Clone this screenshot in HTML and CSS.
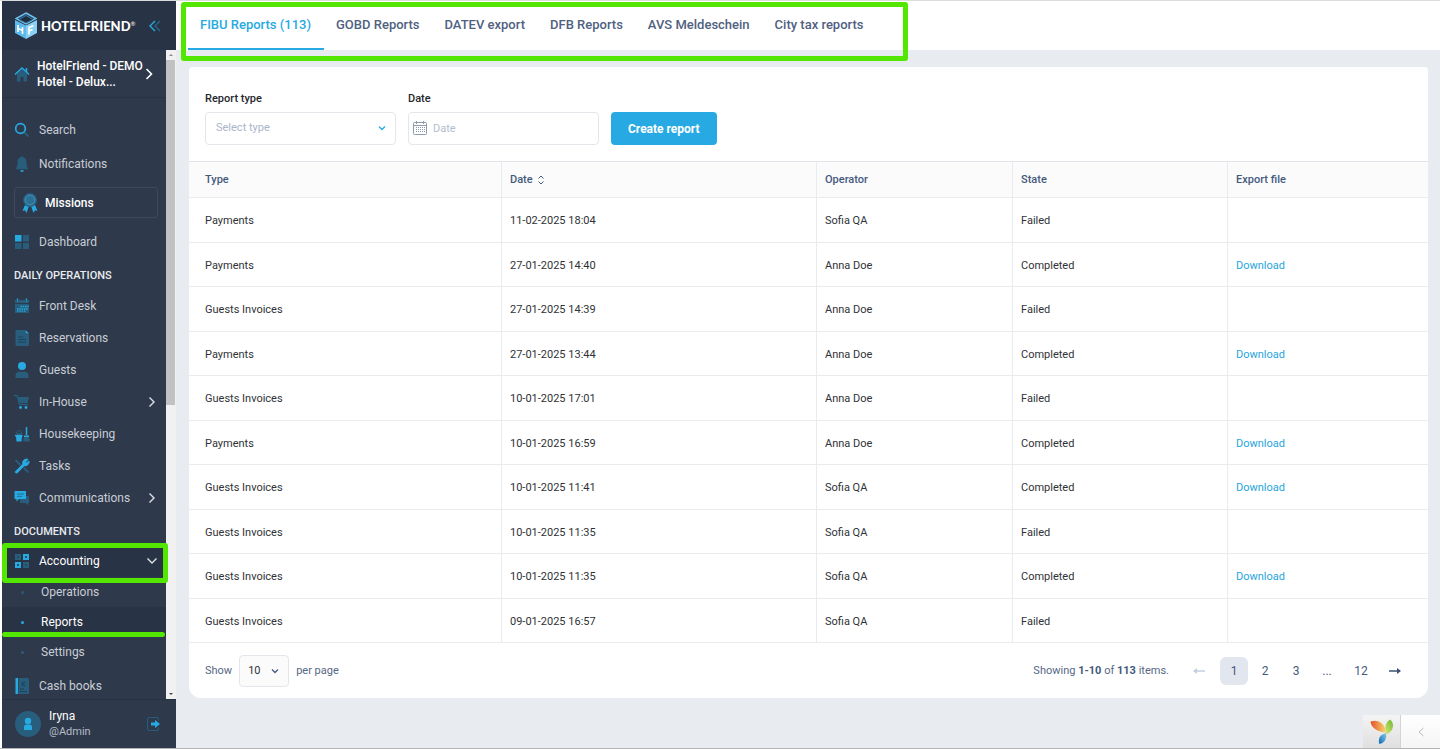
FILE: index.html
```html
<!DOCTYPE html>
<html lang="en">
<head>
<meta charset="utf-8">
<title>HotelFriend - FIBU Reports</title>
<link rel="stylesheet" href="styles.css">
</head>
<body>
<div class="shell">
  <aside class="sidebar">
    <div class="brand">
      <svg class="brand-mark" viewBox="0 0 22 28" aria-hidden="true">
        <path d="M11 1 21 6.500 11 12 1 6.500Z" fill="#22405c" stroke="#6fc3f0" stroke-width="1.500"/>
        <path d="M4 7.500 11 3.500 18 7.500 11 11Z" fill="#1d2c3e" stroke="#3c7aa3"/>
        <path d="M0 8 11 13.500V27L0 21Z" fill="#5db9ec"/>
        <path d="M22 8 11 13.500V27L22 21Z" fill="#8ad0f6"/>
        <path d="M3 13v7M7.500 15v7M3 16.500l4.500 2M14 22.500v-7l4.500-2M14 19l3.500-1.500" fill="none" stroke="#fff" stroke-width="1.600"/>
      </svg>
      <span class="brand-name">HOTELFRIEND<sup>®</sup></span>
      <button class="collapse" aria-label="Collapse menu">
        <svg viewBox="0 0 12 12"><path d="M6 1 1 6l5 5" stroke="#27aae1"/><path d="M11 1 6 6l5 5" stroke="#27658a"/></svg>
      </button>
    </div>
    <div class="scroll-area">
      <nav class="menu">
        <a class="hotel" href="#">
          <svg class="icon" viewBox="0 0 16 16"><path d="M3 8v7.500h3.500V11h3v4.500H13V8L8 3.500Z" fill="#285d7c"/><path d="M1 8.500 8 2l7 6.500M12.500 2v4" fill="none" stroke="#27aae1" stroke-width="1.600"/></svg>
          <span class="hotel-name">HotelFriend - DEMO<br>Hotel - Delux...</span>
          <svg class="chev big" viewBox="0 0 8 12"><path d="m1.500 1 5 5-5 5"/></svg>
        </a>
        <ul class="group top">
          <li><a class="item" href="#"><svg class="icon" viewBox="0 0 16 16"><path d="m10.500 10.500 4 4" stroke="#285d7c" stroke-width="2"/><circle cx="6.500" cy="6.500" r="4.800" fill="none" stroke="#27aae1" stroke-width="1.700"/></svg>Search</a></li>
          <li><a class="item" href="#"><svg class="icon" viewBox="0 0 16 18"><path d="M8 0a1 1 0 0 1 1 1.200C12 2 13 4 13 7c0 4 1 6 2.500 8H.5C2 13 3 11 3 7c0-3 1-5 4-5.800A1 1 0 0 1 8 0Z" fill="#285d7c"/><path d="M6 16h4a2 2 0 0 1-4 0Z" fill="#27aae1"/></svg>Notifications</a></li>
          <li><a class="item missions" href="#"><svg class="icon" viewBox="0 0 16 20"><path d="m3 12-2.500 6 2.500-.7L4.500 20 7 13Zm10 0 2.500 6-2.500-.7L11.500 20 9 13Z" fill="#27aae1"/><circle cx="8" cy="7" r="7" fill="#285d7c"/><circle cx="8" cy="7" r="5" fill="#2c7094" stroke="#3f96c0"/></svg>Missions</a></li>
          <li><a class="item" href="#"><svg class="icon" viewBox="0 0 16 16"><path d="M1 1h6.500v6.500H1Z" fill="#27aae1"/><path d="M9 1h6v6.500H9ZM1 9h6.500v6H1Zm8 0h6v6H9Z" fill="#285d7c"/></svg>Dashboard</a></li>
        </ul>
        <h2 class="heading">DAILY OPERATIONS</h2>
        <ul class="group">
          <li><a class="item" href="#"><svg class="icon" viewBox="0 0 16 16"><path d="M1 2h14v3H1Zm0 4h14v9H1Z" fill="#285d7c"/><path d="M3.500.5v3M12.500.5v3M6.500 8.500h8M3 11h11M3 13.200h9" stroke="#27aae1" stroke-width="1.300" stroke-dasharray="1.500 .8"/></svg>Front Desk</a></li>
          <li><a class="item" href="#"><svg class="icon" viewBox="0 0 16 16"><path d="M2.500 0H11v4h4v10.500a1.500 1.500 0 0 1-1.500 1.500h-11A1.500 1.500 0 0 1 1.500 14.500v-13A1 1 0 0 1 2.500 0Z" fill="#285d7c"/><path d="M11.500 0 15 3.500h-3.500Z" fill="#27aae1"/><path d="M4 7h5M4 9.500h8M4 12h8" stroke="#1c435d"/></svg>Reservations</a></li>
          <li><a class="item" href="#"><svg class="icon" viewBox="0 0 16 16"><circle cx="8" cy="4" r="4" fill="#27aae1"/><path d="M1.500 16v-2a4.500 4.500 0 0 1 4-4.500q2.500 1 5 0a4.500 4.500 0 0 1 4 4.500v2Z" fill="#285d7c"/></svg>Guests</a></li>
          <li><a class="item" href="#"><svg class="icon" viewBox="0 0 16 16"><path d="M0 1.500h3l2.500 9H14" fill="none" stroke="#285d7c" stroke-width="1.300"/><path d="M3.500 3H15l-1.500 6h-8Z" fill="#285d7c"/><circle cx="6.500" cy="13.500" r="1.400" fill="#27aae1"/><circle cx="12" cy="13.500" r="1.400" fill="#27aae1"/></svg>In-House<svg class="chev" viewBox="0 0 8 12"><path d="m1.500 1.500 4.500 4.500-4.500 4.500"/></svg></a></li>
          <li><a class="item" href="#"><svg class="icon" viewBox="0 0 16 16"><path d="M2 9C2 3 8 3 8 9" fill="none" stroke="#285d7c"/><path d="M3 7h4v2H3ZM10 11h5l1 4.500H9Z" fill="#285d7c"/><path d="M1 9h7.500v1.500H8l-.5 5h-5l-.5-5H1Z" fill="#27aae1"/><path d="M12.500 1v8" stroke="#27aae1" stroke-width="1.500"/><path d="M10 9.500h5v1.500h-5Z" fill="#27aae1"/></svg>Housekeeping</a></li>
          <li><a class="item" href="#"><svg class="icon" viewBox="0 0 16 16"><path d="m1.500 2 5 5M10 10l4.500 4.500" stroke="#285d7c" stroke-width="2"/><path d="M2.500 14 10 6.500" stroke="#27aae1" stroke-width="3" stroke-linecap="round"/><path d="M14 1.500 11.500 4l1 1L15 3a4 4 0 0 1-5.500 4.500A4 4 0 0 1 13 1Z" fill="#27aae1" stroke="#27aae1"/></svg>Tasks</a></li>
          <li><a class="item" href="#"><svg class="icon" viewBox="0 0 16 16"><path d="M6 6h9v7h-1v2.500L11.500 13H6Z" fill="#285d7c"/><path d="M.5 1h11.500v8H5l-2.500 2.500V9h-2Z" fill="#27aae1"/><path d="M3 4h7M3 6.300h5" stroke="#1f6e96"/></svg>Communications<svg class="chev" viewBox="0 0 8 12"><path d="m1.500 1.500 4.500 4.500-4.500 4.500"/></svg></a></li>
        </ul>
        <h2 class="heading documents">DOCUMENTS</h2>
        <ul class="group">
          <li>
            <a class="item active marked-box" href="#"><svg class="icon" viewBox="0 0 16 16"><path d="M1 1h6v6H1Zm8 8h6v6H9Z" fill="#285d7c"/><path d="M9 1h6v6H9ZM1 9h6v6H1Z" fill="#27aae1"/><path d="M3 4h2m6 0h2M12 3v2M3 12h2M4 11v2m7-1h2" stroke="#1d3a50"/></svg>Accounting<svg class="chev down" viewBox="0 0 12 12"><path d="m1.500 3.500 4.500 4.500 4.500-4.500"/></svg></a>
            <ul class="submenu">
              <li><a class="sub" href="#">Operations</a></li>
              <li><a class="sub current marked-line" href="#">Reports</a></li>
              <li><a class="sub" href="#">Settings</a></li>
            </ul>
          </li>
          <li><a class="item" href="#"><svg class="icon" viewBox="0 0 16 16"><path d="M4.500 0h9A1.500 1.500 0 0 1 15 1.500v13a1.500 1.500 0 0 1-1.500 1.500h-9Z" fill="#285d7c"/><path d="M1.500 0H4v16H1.500Z" fill="#27aae1"/><path d="M11.500 4.500a2 2 0 1 0 0 3M7 6h3.500M6 11h4M6 13.500h7" fill="none" stroke="#1c435d"/></svg>Cash books</a></li>
        </ul>
      </nav>
      <div class="scrollbar" aria-hidden="true">
        <svg viewBox="0 0 10 10"><path d="m3 6 2-2 2 2Z" fill="#888"/></svg>
        <div class="thumb"></div>
        <svg viewBox="0 0 10 10"><path d="m3 4 2 2 2-2Z" fill="#444"/></svg>
      </div>
    </div>
    <div class="user">
      <svg class="avatar" viewBox="0 0 26 26" aria-hidden="true"><circle cx="13" cy="13" r="13" fill="#285d7c"/><circle cx="13" cy="10" r="3.200" fill="#27aae1"/><path d="M9 19v-3q0-2.500 2.500-2.500h3q2.500 0 2.500 2.500v3Z" fill="#27aae1"/></svg>
      <div class="user-text"><span class="user-name">Iryna</span><span class="user-role">@Admin</span></div>
      <button class="logout" aria-label="Log out"><svg viewBox="0 0 14 14"><path d="M11.500 3.500V2A1.500 1.500 0 0 0 10 .5H2A1.500 1.500 0 0 0 .5 2v10A1.500 1.500 0 0 0 2 13.500h8a1.500 1.500 0 0 0 1.500-1.500v-1.500" fill="none" stroke="#285d7c"/><path d="M4 5.500h4V3l5 4-5 4V8.500H4Z" fill="#27aae1"/></svg></button>
    </div>
  </aside>

  <main class="main">
    <nav class="tabs">
      <a class="tab selected" href="#">FIBU Reports (113)</a>
      <a class="tab" href="#">GOBD Reports</a>
      <a class="tab" href="#">DATEV export</a>
      <a class="tab" href="#">DFB Reports</a>
      <a class="tab" href="#">AVS Meldeschein</a>
      <a class="tab" href="#">City tax reports</a>
      <span class="tabs-mark"></span>
    </nav>
    <section class="card">
      <form class="filters">
        <div class="field">
          <label for="type">Report type</label>
          <div class="control">
            <select id="type" class="type-select"><option>Select type</option></select>
            <svg class="caret" viewBox="0 0 8 8"><path d="m1 2.500 3 3 3-3" stroke="#27aae1"/></svg>
          </div>
        </div>
        <div class="field">
          <label for="date">Date</label>
          <div class="control">
            <input id="date" class="date-input" type="text" placeholder="Date">
            <svg class="cal" viewBox="0 0 14 14"><rect x=".5" y="1.500" width="13" height="12" rx="1"/><path d="M1 4.500h12M3.500 0v3M10.500 0v3"/><path d="M3 6.500h9M3 8.500h9M3 10.500h9" stroke-dasharray="1 1"/></svg>
          </div>
        </div>
        <button class="create" type="button">Create report</button>
      </form>
      <table class="reports">
        <colgroup><col class="c-type"><col class="c-date"><col class="c-operator"><col class="c-state"><col class="c-file"></colgroup>
        <thead>
          <tr><th>Type</th><th>Date <svg class="sort" viewBox="0 0 8 10"><path d="m1.500 3.500 2.500-2.500 2.500 2.500M1.500 6.500 4 9l2.500-2.500"/></svg></th><th>Operator</th><th>State</th><th>Export file</th></tr>
        </thead>
        <tbody>
          <tr><td>Payments</td><td>11-02-2025 18:04</td><td>Sofia QA</td><td>Failed</td><td></td></tr>
          <tr><td>Payments</td><td>27-01-2025 14:40</td><td>Anna Doe</td><td>Completed</td><td><a href="#">Download</a></td></tr>
          <tr><td>Guests Invoices</td><td>27-01-2025 14:39</td><td>Anna Doe</td><td>Failed</td><td></td></tr>
          <tr><td>Payments</td><td>27-01-2025 13:44</td><td>Anna Doe</td><td>Completed</td><td><a href="#">Download</a></td></tr>
          <tr><td>Guests Invoices</td><td>10-01-2025 17:01</td><td>Anna Doe</td><td>Failed</td><td></td></tr>
          <tr><td>Payments</td><td>10-01-2025 16:59</td><td>Anna Doe</td><td>Completed</td><td><a href="#">Download</a></td></tr>
          <tr><td>Guests Invoices</td><td>10-01-2025 11:41</td><td>Sofia QA</td><td>Completed</td><td><a href="#">Download</a></td></tr>
          <tr><td>Guests Invoices</td><td>10-01-2025 11:35</td><td>Sofia QA</td><td>Failed</td><td></td></tr>
          <tr><td>Guests Invoices</td><td>10-01-2025 11:35</td><td>Sofia QA</td><td>Completed</td><td><a href="#">Download</a></td></tr>
          <tr><td>Guests Invoices</td><td>09-01-2025 16:57</td><td>Sofia QA</td><td>Failed</td><td></td></tr>
        </tbody>
      </table>
      <div class="footer">
        <div class="per-page">
          <label for="size">Show</label>
          <div class="control">
            <select id="size" class="size-select"><option>10</option></select>
            <svg class="caret" viewBox="0 0 8 8"><path d="m1 2.500 3 3 3-3" stroke="#445a7c"/></svg>
          </div>
          <span>per page</span>
        </div>
        <p class="summary">Showing <b>1-10</b> of <b>113</b> items.</p>
        <nav class="pager">
          <button class="page arrow prev" disabled aria-label="Previous page"><svg viewBox="0 0 12 8"><path d="M1 4h11" stroke="#c5cee0" stroke-width="1.500"/><path d="M0 4 4 1v6Z" fill="#c5cee0"/></svg></button>
          <a class="page here" href="#">1</a>
          <a class="page" href="#">2</a>
          <a class="page" href="#">3</a>
          <span class="page">...</span>
          <a class="page" href="#">12</a>
          <button class="page arrow" aria-label="Next page"><svg viewBox="0 0 12 8"><path d="M0 4h11" stroke="#3d5273" stroke-width="1.500"/><path d="M12 4 8 1v6Z" fill="#3d5273"/></svg></button>
        </nav>
      </div>
    </section>
  </main>
</div>

<div class="debug-bar">
  <a class="debug-logo" href="#" aria-label="Debugger">
    <svg viewBox="0 0 24 25">
      <defs>
        <linearGradient id="orange"><stop offset="0" stop-color="#e2502c"/><stop offset="1" stop-color="#fbd36a"/></linearGradient>
        <linearGradient id="green" x1="1" y1="0" x2="0" y2="1"><stop offset="0" stop-color="#6db52c"/><stop offset="1" stop-color="#d9ea7a"/></linearGradient>
        <linearGradient id="blue" x1="1" y1="0" x2="0" y2="1"><stop offset="0" stop-color="#8ccbe8"/><stop offset="1" stop-color="#0a67b5"/></linearGradient>
      </defs>
      <path d="M.5 2.500Q8 0 13 5.500q3 4 2.500 8Q11 13 6.500 11 1 8 .5 2.500Z" fill="url(#orange)"/>
      <path d="M20 .5q3 2 3 6.500-.5 5.500-6.500 8.500Q14 9 16 5 17.500 1.500 20 .5Z" fill="url(#green)"/>
      <path d="M16 14q1 4-1 7.500-2 3-5.500 3.500Q7.500 20 11 16.500q2-2 5-2.500Z" fill="url(#blue)"/>
    </svg>
  </a>
  <button class="debug-toggle" aria-label="Show debug toolbar"><svg viewBox="0 0 8 10"><path d="M6.500 1 2 5l4.500 4"/></svg></button>
</div>
</body>
</html>
```

FILE: styles.css
```css
* { box-sizing: border-box; }

body {
  margin: 0;
  font-family: Roboto, "Liberation Sans", sans-serif;
  font-size: 12px;
  line-height: 16px;
  color: #303236;
  background: #fff;
}

a { color: inherit; text-decoration: none; }
button { padding: 0; border: 0; background: none; font: inherit; color: inherit; cursor: pointer; }
ul { margin: 0; padding: 0; list-style: none; }
svg { display: block; flex: none; }

.shell {
  display: flex;
  height: 100vh;
  padding-left: 2px;
  border-top: 1px solid #dcdcdc;
  border-bottom: 1px solid #b4b4b4;
}

/* Sidebar */
.sidebar {
  display: flex;
  flex-direction: column;
  flex: none;
  width: 174px;
  background: #2e394b;
  color: #c9ced6;
}
.brand {
  display: flex;
  align-items: center;
  flex: none;
  height: 49px;
  padding: 0 15px 0 13px;
  background: #283345;
}
.brand-mark { width: 22px; height: 28px; }
.brand-name {
  flex: 1;
  margin-left: 4px;
  color: #fff;
  font-family: Lato, sans-serif;
  font-size: 13px;
  font-weight: 900;
  white-space: nowrap;
}
.brand-name sup { font-size: 6px; line-height: 0; vertical-align: 5px; font-weight: 400; }
.collapse svg { width: 12px; height: 12px; fill: none; stroke-width: 1.4; }

.scroll-area { display: flex; flex: 1; min-height: 0; overflow: hidden; }
.menu { flex: 1; min-width: 0; }

.hotel {
  display: flex;
  align-items: center;
  height: 48px;
  padding: 0 13px 0 12px;
  border-bottom: 1px solid #273243;
  color: #fff;
  font-weight: 500;
}
.hotel-name { flex: 1; margin-left: 7px; white-space: nowrap; }
.icon { width: 16px; height: 16px; }
.chev { width: 8px; height: 12px; margin-left: auto; fill: none; stroke: #dfe3e8; stroke-width: 1.4; }
.chev.big { stroke: #fff; stroke-width: 1.6; }
.chev.down { width: 12px; margin-right: -2px; }

.group.top { padding-top: 16px; }
.item {
  display: flex;
  align-items: center;
  gap: 9px;
  height: 32px;
  padding: 0 10px 0 12px;
}
.group.top .item { margin-bottom: 2px; }
.group.top .missions {
  height: 31px;
  margin: 7px 8px 8px 12px;
  padding: 0 7px;
  gap: 7px;
  border: 1px solid #3d495c;
  border-radius: 3px;
  color: #fff;
  font-weight: 500;
}
.missions .icon { height: 20px; }
.heading {
  margin: 0;
  padding: 8px 12px 6px;
  font-size: 11px;
  font-weight: 500;
  line-height: 16px;
  color: #e8ebef;
}
.heading.documents { padding: 10px 12px 5px; }
.item.active { color: #fff; background: #283345; }

.submenu { padding-bottom: 3px; }
.sub {
  display: flex;
  align-items: center;
  height: 30px;
  padding-left: 19px;
}
.sub::before {
  content: "";
  width: 3px;
  height: 3px;
  margin-right: 17px;
  border-radius: 50%;
  background: #285d7c;
}
.sub.current { color: #fff; background: #283345; }
.sub.current::before { background: #27aae1; }

/* Green highlight markers */
.marked-box, .marked-line { position: relative; }
.marked-box::after {
  content: "";
  position: absolute;
  z-index: 2;
  inset: -2px -2px -6px 0;
  border: 5px solid #52e600;
  border-radius: 3px;
}
.marked-line::after {
  content: "";
  position: absolute;
  z-index: 2;
  inset: auto 1px 0 0;
  height: 5px;
  border-radius: 3px;
  background: #52e600;
}

.scrollbar { display: flex; flex-direction: column; flex: none; width: 10px; padding: 0 1px 0 0; background: #f1f1f1; }
.scrollbar svg { width: 10px; height: 10px; }
.thumb { width: 9px; height: 345px; margin-bottom: auto; background: #c1c1c1; }

.user {
  display: flex;
  align-items: center;
  flex: none;
  height: 49px;
  padding: 0 15px 0 13px;
  border-top: 1px solid #263142;
}
.avatar { width: 26px; height: 26px; }
.user-text { display: flex; flex-direction: column; flex: 1; margin-left: 8px; }
.user-name { color: #fff; }
.user-role { font-size: 11px; color: #b5bdc9; }
.logout svg { width: 14px; height: 14px; }

/* Main column */
.main { display: flex; flex-direction: column; flex: 1; min-width: 0; background: #e8ebf0; }
.tabs {
  position: relative;
  display: flex;
  flex: none;
  height: 49px;
  padding-left: 12px;
  background: #fff;
}
.tab {
  padding: 14px 13px 0 12px;
  border-bottom: 2px solid transparent;
  color: #50617f;
  font-size: 13px;
  font-weight: 500;
  line-height: 20px;
  white-space: nowrap;
}
.tab.selected { color: #27aae1; border-bottom-color: #27aae1; }
.tabs-mark {
  position: absolute;
  inset: 1px auto -11px 5px;
  width: 727px;
  border: 5px solid #52e600;
  border-radius: 3px;
  pointer-events: none;
}

.card { margin: 17px 12px 0 13px; border-radius: 4px 4px 12px 12px; background: #fff; }
.filters { display: flex; align-items: flex-end; gap: 12px; padding: 24px 16px 16px; }
.field { display: flex; flex-direction: column; gap: 5px; width: 191px; }
.field label { color: #26282c; font-weight: 500; font-size: 11px; }
.control { position: relative; }
.control svg { position: absolute; pointer-events: none; fill: none; }
.type-select, .date-input, .size-select {
  display: block;
  width: 100%;
  height: 33px;
  border: 1px solid #e4e6eb;
  border-radius: 4px;
  background: #fff;
  font: inherit;
  font-size: 11px;
  appearance: none;
  outline: 0;
}
.type-select { padding: 0 10px 2px; color: #a9b5c9; }
.date-input { padding: 0 8px 0 24px; }
.date-input::placeholder { color: #b3bdcf; opacity: 1; }
.caret { top: 12px; right: 10px; width: 8px; height: 8px; stroke-width: 1.3; }
.cal { top: 9px; left: 5px; width: 14px; height: 14px; stroke: #8e99ab; }
.create {
  height: 33px;
  padding: 0 17px;
  border-radius: 4px;
  background: #27aae4;
  color: #fff;
  font-weight: 700;
}

.reports { width: 100%; table-layout: fixed; border-collapse: separate; border-spacing: 0; border-top: 1px solid #e1e4e9; }
.c-type { width: 313px; }
.c-date { width: 315px; }
.c-operator { width: 196px; }
.c-state { width: 215px; }
.c-file { width: 200px; }
.reports th, .reports td {
  height: 44px;
  padding: 2px 8px 0;
  border-right: 1px solid #e9ebef;
  border-bottom: 1px solid #e9ebef;
  text-align: left;
  font-size: 11px;
}
.reports tr:nth-child(odd) td { height: 45px; }
.reports th { height: 36px; padding-top: 0; background: #fbfbfc; color: #445a7c; font-weight: 500; }
.reports th:first-child, .reports td:first-child { padding-left: 16px; }
.reports th:last-child, .reports td:last-child { border-right: 0; }
.reports td a { color: #27a5dc; }
.sort { display: inline-block; width: 8px; height: 10px; margin-left: 2px; vertical-align: -2px; fill: none; stroke: #445a7c; }

.footer { display: flex; align-items: center; padding: 12px 19px 11px 16px; color: #566885; font-size: 11px; }
.per-page { display: flex; align-items: center; gap: 7px; flex: 1; }
.size-select { width: 50px; height: 32px; padding: 0 8px; background: #fbfbfc; color: #303236; }
.summary { margin: 0 12px 0 0; }
.summary b { color: #445a7c; }
.pager { display: flex; gap: 3px; font-size: 12px; }
.page { display: flex; align-items: center; justify-content: center; width: 28px; height: 28px; border-radius: 6px; color: #445a7c; }
.page.here { background: #e2e6ef; }
.page.prev { width: 36px; }
.page:nth-last-child(2) { width: 34px; }
.arrow svg { width: 12px; height: 8px; }

/* Debug toolbar */
.debug-bar { position: fixed; right: 0; bottom: 1px; display: flex; height: 33px; }
.debug-logo { display: flex; align-items: center; justify-content: center; width: 38px; border-right: 1px solid #d4d4d4; background: linear-gradient(#f4f4f4, #dfdfdf); }
.debug-logo svg { width: 24px; height: 25px; }
.debug-toggle { display: flex; align-items: center; justify-content: center; width: 39px; background: linear-gradient(#fff, #f5f5f5); }
.debug-toggle svg { width: 8px; height: 10px; fill: none; stroke: #bbb; }
```
